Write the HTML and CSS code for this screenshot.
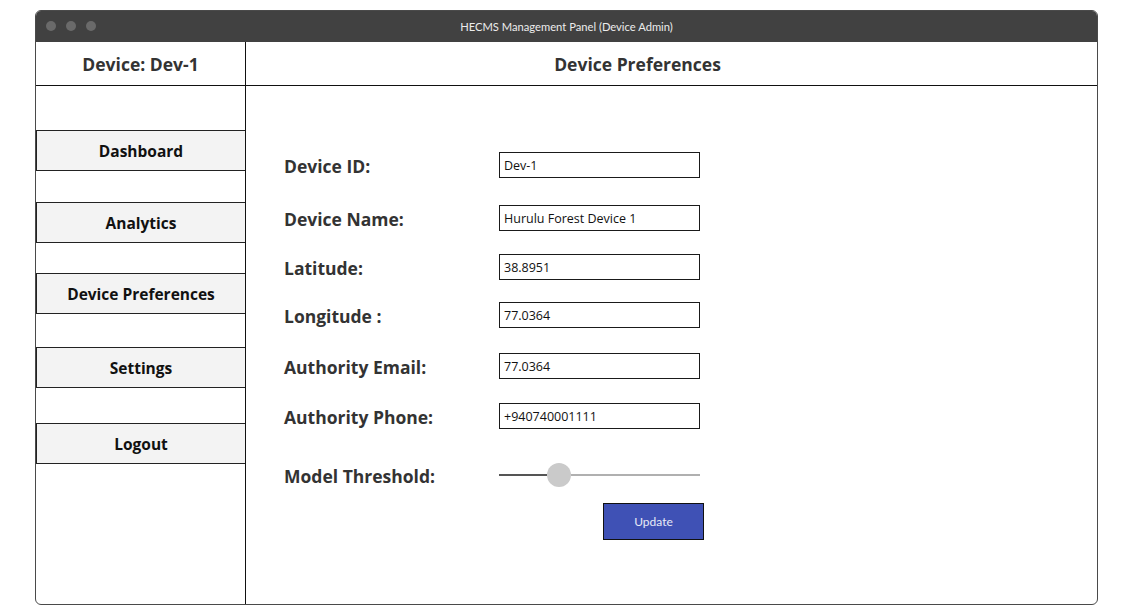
FILE: index.html
```html
<!DOCTYPE html>
<html>
<head>
<meta charset="utf-8">
<title>HECMS Management Panel</title>
<link rel="stylesheet" href="styles.css">
</head>
<body>
<div class="window">
  <div class="titlebar">
    <div class="dots"><span class="dot"></span><span class="dot"></span><span class="dot"></span></div>
    <div class="title">HECMS Management Panel (Device Admin)</div>
  </div>
  <div class="app">
    <aside class="sidebar">
      <div class="side-head">Device: Dev-1</div>
      <nav class="nav">
        <div class="nav-btn">Dashboard</div>
        <div class="nav-btn">Analytics</div>
        <div class="nav-btn">Device Preferences</div>
        <div class="nav-btn">Settings</div>
        <div class="nav-btn">Logout</div>
      </nav>
    </aside>
    <main class="main">
      <div class="main-head">Device Preferences</div>
      <form class="form">
        <div class="row r1"><label class="label">Device ID:</label><div class="field">Dev-1</div></div>
        <div class="row r2"><label class="label">Device Name:</label><div class="field">Hurulu Forest Device 1</div></div>
        <div class="row r3"><label class="label">Latitude:</label><div class="field">38.8951</div></div>
        <div class="row r4"><label class="label">Longitude :</label><div class="field">77.0364</div></div>
        <div class="row r5"><label class="label">Authority Email:</label><div class="field">77.0364</div></div>
        <div class="row r6"><label class="label">Authority Phone:</label><div class="field">+940740001111</div></div>
        <div class="row r7"><label class="label">Model Threshold:</label>
          <div class="slider"><span class="track-on"></span><span class="thumb"></span><span class="track-off"></span></div>
        </div>
        <div class="actions"><button type="button" class="update">Update</button></div>
      </form>
    </main>
  </div>
</div>
</body>
</html>
```

FILE: styles.css
```css
* { box-sizing: border-box; }
html, body { margin: 0; padding: 0; background: #fff; }
body {
  font-family: "Open Sans", "Noto Sans", sans-serif;
  padding: 10px 0 0 35px;
}
.window {
  width: 1063px;
  height: 595px;
  border: 1px solid #4a4a4a;
  border-radius: 6px;
  overflow: hidden;
  display: flex;
  flex-direction: column;
}
.titlebar {
  height: 32px;
  background: #414141;
  display: flex;
  align-items: center;
  position: relative;
  margin: -1px -1px 0 -1px;
}
.dots { display: flex; gap: 10px; padding-left: 11px; }
.dot { width: 10px; height: 10px; border-radius: 50%; background: #6a6a6a; }
.title {
  position: absolute;
  left: 0; right: 0;
  text-align: center;
  color: #ececec;
  font-family: Lato, "Open Sans", sans-serif;
  font-size: 11.2px;
}
.app { flex: 1; display: flex; }
.sidebar {
  width: 210px;
  border-right: 1px solid #111;
  display: flex;
  flex-direction: column;
}
.side-head, .main-head {
  height: 44px;
  border-bottom: 1px solid #111;
  display: flex;
  align-items: center;
  justify-content: center;
  font-weight: 700;
  font-size: 17.5px;
  color: #333;
}
.nav { display: flex; flex-direction: column; padding-top: 44px; }
.nav-btn {
  height: 41px;
  background: #f3f3f3;
  border: 1px solid #222;
  border-right: none;
  display: flex;
  align-items: center;
  justify-content: center;
  font-weight: 700;
  font-size: 15.5px;
  color: #111;
}
.nav-btn:nth-child(2) { margin-top: 31px; }
.nav-btn:nth-child(3) { margin-top: 30px; }
.nav-btn:nth-child(4) { margin-top: 33px; }
.nav-btn:nth-child(5) { margin-top: 35px; }
.main { flex: 1; display: flex; flex-direction: column; }
.main-head { padding-right: 68px; }
.form { display: flex; flex-direction: column; padding-left: 38px; }
.row { display: flex; align-items: center; height: 26px; }
.r1 { margin-top: 66px; }
.r2 { margin-top: 27px; }
.r3 { margin-top: 23px; }
.r4 { margin-top: 22px; }
.r5 { margin-top: 25px; }
.r6 { margin-top: 24px; }
.r7 { margin-top: 33px; }
.label {
  width: 215px;
  font-weight: 700;
  font-size: 17.5px;
  color: #333;
  padding-top: 2px;
}
.field {
  width: 201px;
  height: 26px;
  border: 1px solid #1a1a1a;
  font-size: 12.5px;
  color: #111;
  display: flex;
  align-items: center;
  padding-left: 4px;
}
.slider { width: 201px; display: flex; align-items: center; }
.track-on { width: 48px; height: 2px; background: #555; }
.thumb { width: 24px; height: 24px; border-radius: 50%; background: #cacaca; }
.track-off { flex: 1; height: 2px; background: #b0b0b0; }
.actions { padding-left: 319px; margin-top: 15px; }
.update {
  width: 101px;
  height: 37px;
  background: #3f51b5;
  border: 1px solid #111;
  color: #e8eaf6;
  font-family: Lato, "Open Sans", sans-serif;
  font-size: 12px;
  padding: 0;
}
```
